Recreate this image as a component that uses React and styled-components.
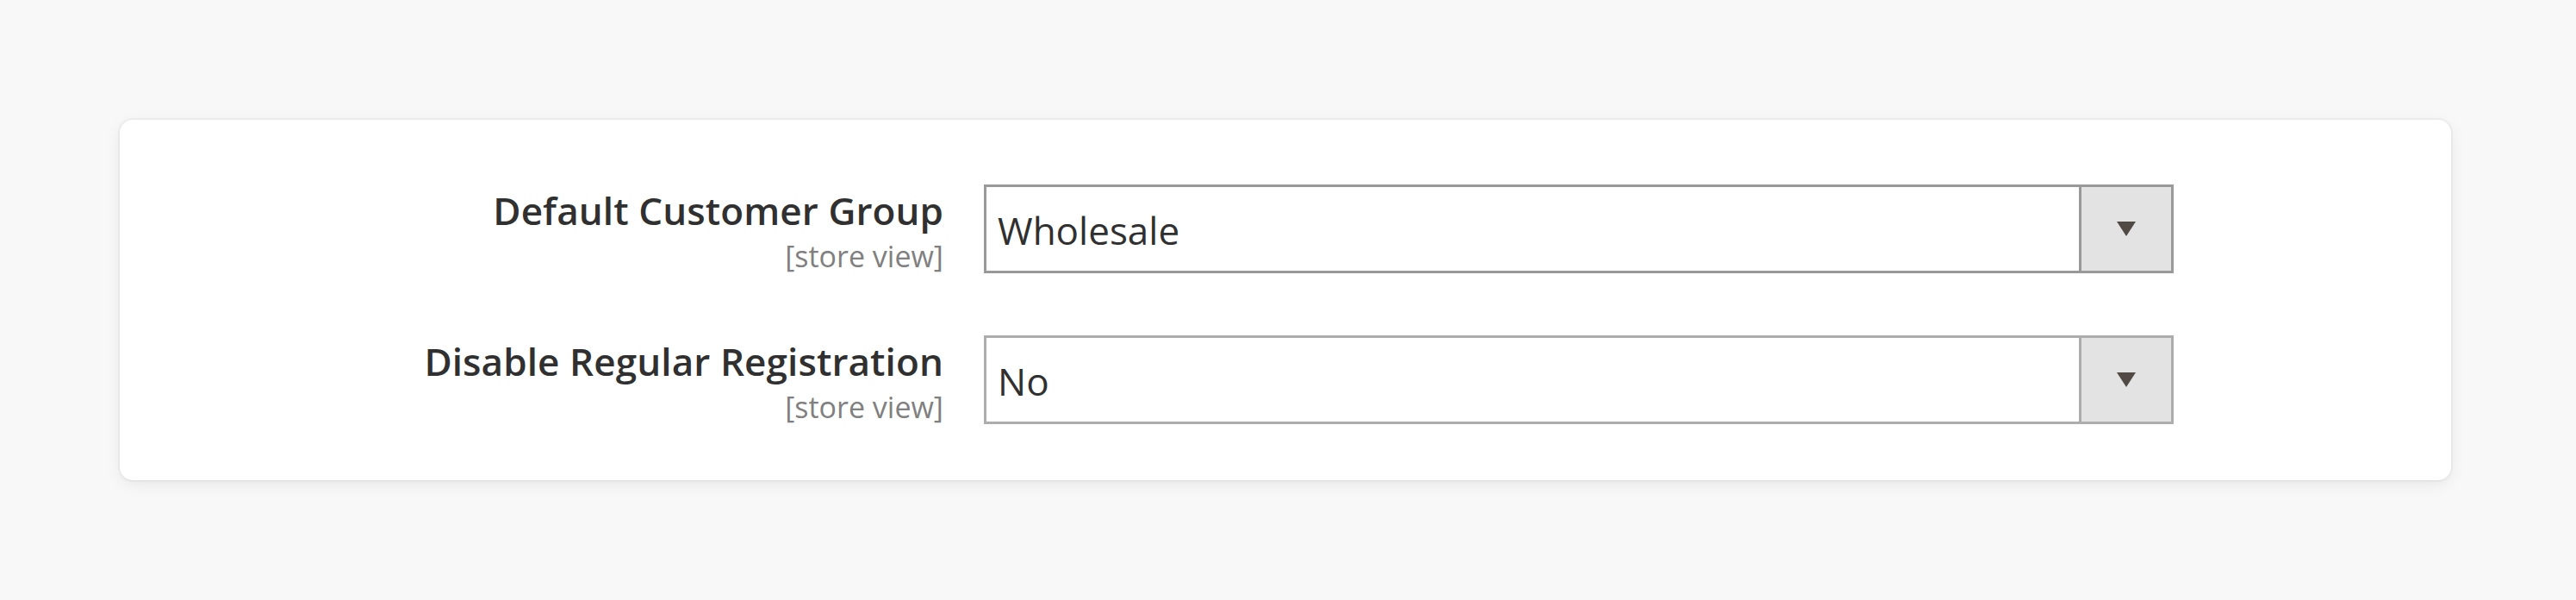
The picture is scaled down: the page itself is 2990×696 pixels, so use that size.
import React from 'react'
import styled, { createGlobalStyle } from 'styled-components'

const GlobalStyle = createGlobalStyle`
  html, body {
    margin: 0;
    padding: 0;
    background: #f8f8f8;
    font-family: "Open Sans", "Noto Sans", "Liberation Sans", sans-serif;
  }
`

const Page = styled.div`
  width: 2990px;
  height: 696px;
  box-sizing: border-box;
  padding: 139px 145px 0 139px;
  background: #f8f8f8;
`

const Card = styled.div`
  background: #fff;
  border-radius: 15px;
  box-shadow: 0 0 0 2px rgba(0, 0, 0, 0.035), 0 5px 18px rgba(0, 0, 0, 0.07);
  padding: 75px 0 62px 0;
  display: flex;
  flex-direction: column;
  gap: 69px;
`

const Row = styled.div`
  display: grid;
  grid-template-columns: 956px 1381px;
  column-gap: 47px;
  align-items: start;
`

const LabelCell = styled.div`
  display: flex;
  flex-direction: column;
  align-items: flex-end;
`

const Label = styled.span`
  font-size: 44px;
  line-height: 60px;
  font-weight: 600;
  color: #303030;
  letter-spacing: 0.1px;
`

const Scope = styled.span`
  font-size: 34px;
  line-height: 46px;
  color: #808080;
`

const Select = styled.div`
  display: flex;
  height: 103px;
  box-sizing: border-box;
  border: 3px solid ${p => (p.$active ? '#999999' : '#adadad')};
  background: #fff;
`

const Value = styled.div`
  flex: 1;
  display: flex;
  align-items: center;
  padding-left: 13px;
  padding-top: 2px;
  font-size: 44px;
  color: #303030;
`

const ArrowButton = styled.div`
  width: 104px;
  display: flex;
  align-items: center;
  justify-content: center;
  background: #e3e3e3;
  border-left: 3px solid ${p => (p.$active ? '#999999' : '#adadad')};
`

const Arrow = styled.span`
  width: 0;
  height: 0;
  border-left: 11px solid transparent;
  border-right: 11px solid transparent;
  border-top: 17px solid #514943;
`

const fields = [
  { label: 'Default Customer Group', value: 'Wholesale', active: true },
  { label: 'Disable Regular Registration', value: 'No', active: false },
]

export default function App() {
  return (
    <>
      <GlobalStyle />
      <Page>
        <Card>
          {fields.map(f => (
            <Row key={f.label}>
              <LabelCell>
                <Label>{f.label}</Label>
                <Scope>[store view]</Scope>
              </LabelCell>
              <Select $active={f.active}>
                <Value>{f.value}</Value>
                <ArrowButton $active={f.active}>
                  <Arrow />
                </ArrowButton>
              </Select>
            </Row>
          ))}
        </Card>
      </Page>
    </>
  )
}
